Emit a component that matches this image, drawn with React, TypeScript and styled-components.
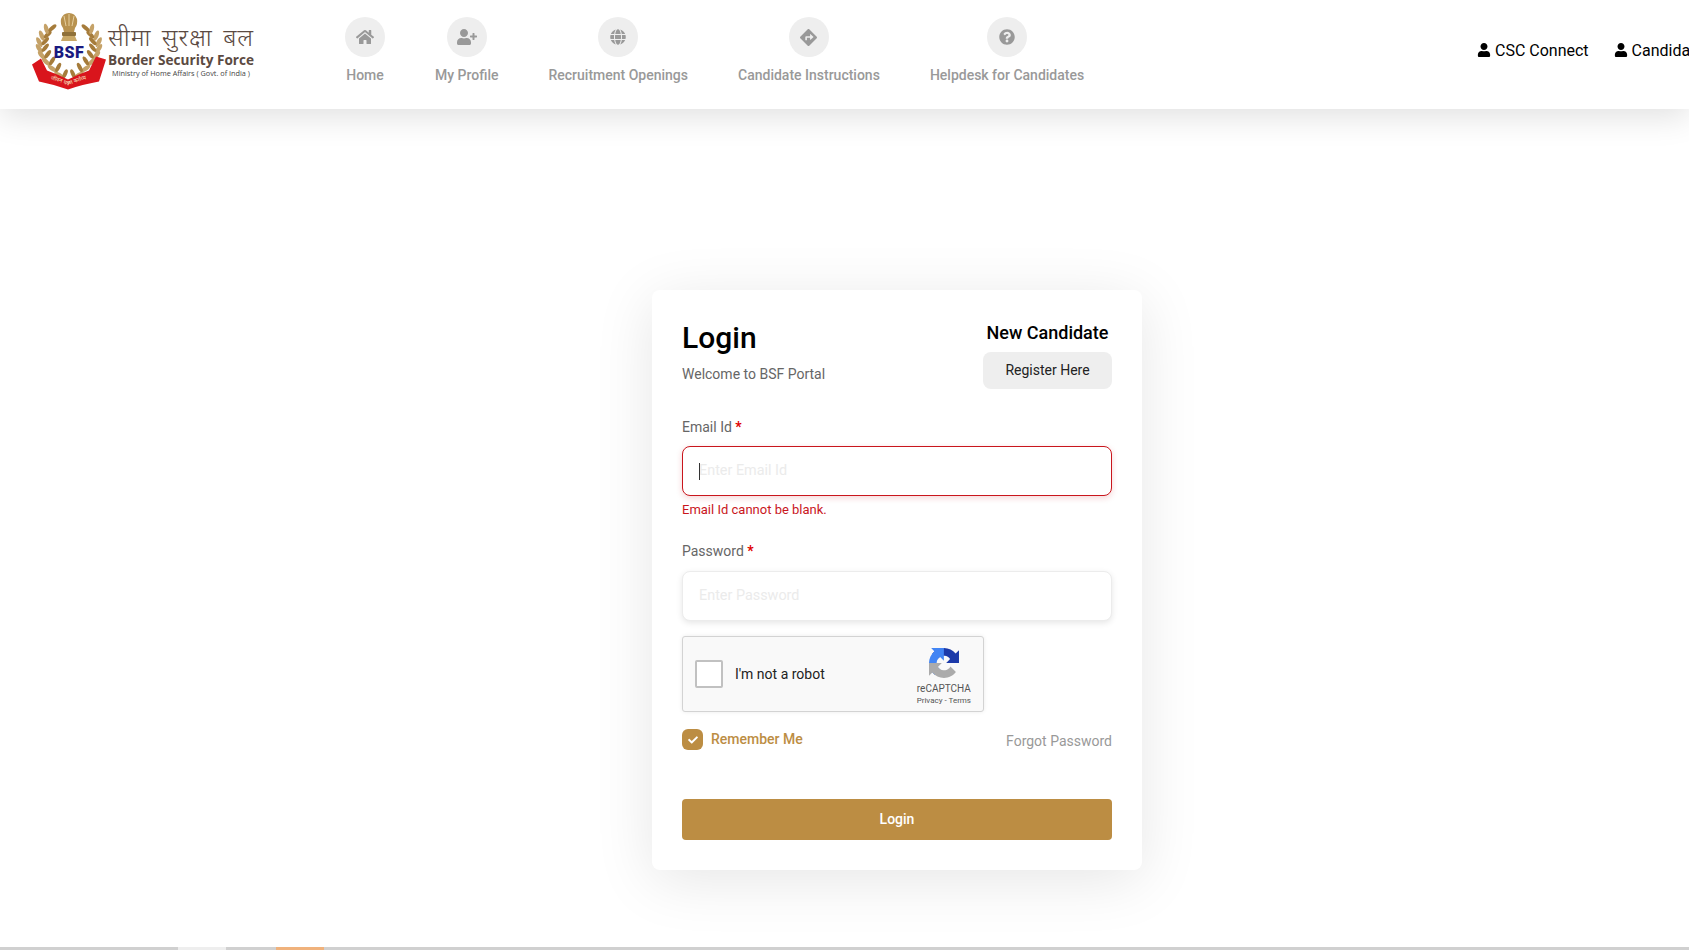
import React from 'react';
import styled, { createGlobalStyle } from 'styled-components';
import { FaCheck, FaDirections, FaGlobe, FaHome, FaQuestionCircle, FaUser, FaUserPlus } from 'react-icons/fa';

const gold = '#bc8d43';

const GlobalStyle = createGlobalStyle`
  html, body {
    margin: 0;
    padding: 0;
    background: #fff;
    overflow: hidden;
  }
  * {
    box-sizing: border-box;
  }
  body {
    font-family: Roboto, 'Liberation Sans', sans-serif;
  }
`;

const navItems = [
  { label: 'Home', icon: <FaHome size={18} /> },
  { label: 'My Profile', icon: <FaUserPlus size={20} /> },
  { label: 'Recruitment Openings', icon: <FaGlobe size={16} /> },
  { label: 'Candidate Instructions', icon: <FaDirections size={17} /> },
  { label: 'Helpdesk for Candidates', icon: <FaQuestionCircle size={16} /> },
];

const leafSteps = [0, 1, 2, 3, 4, 5, 6, 7];

const Emblem = () => (
  <svg width="80" height="84" viewBox="0 0 80 84">
    <defs>
      <path id="ribbon-line" d="M9 67.5 Q24 70.5 38 76.5 Q52 70.5 68 67.5" />
    </defs>
    {/* laurel wreath */}
    {[1, -1].map(side => (
      <g key={side} transform={side === 1 ? undefined : 'translate(78 0) scale(-1 1)'}>
        {leafSteps.map(i => {
          const t = i / 7;
          const x = 32 - 22 * Math.sin(t * 2.35) + t * 3;
          const y = 66 - t * 46;
          return (
            <g key={i}>
              <ellipse cx={x - 3} cy={y} rx="5.4" ry="2.2" fill="#c5a268" transform={`rotate(${30 + t * 45} ${x - 3} ${y})`} />
              <ellipse cx={x + 3} cy={y - 1} rx="5" ry="2" fill="#a67c3b" transform={`rotate(${-65 + t * 25} ${x + 3} ${y - 1})`} />
            </g>
          );
        })}
      </g>
    ))}
    {/* lion capital */}
    <path d="M31 10 Q33 4 39 4 Q45 4 47 10 Q48 15 45 19 L44 23 L34 23 L33 19 Q30 15 31 10Z" fill="#b8924f" />
    <path d="M34 7 L36 17 M39 5 L39 17 M44 7 L42 17" stroke="#e6cf9f" strokeWidth="1" />
    <rect x="32" y="23" width="14" height="4" rx="1" fill="#8f7038" />
    <path d="M33 27 L45 27 L47 32 L31 32Z" fill="#c9a866" />
    {/* ribbon */}
    <path transform="translate(0 1.5)" d="M2 54 L11 48 L17 60 Q28 64 38 69 Q48 64 59 60 L66 46 L76 49 L69 71 Q52 74 38 79 Q24 74 9 71Z" fill="#d9151c" />
    <text x="39" y="49" textAnchor="middle" fontFamily="Roboto, sans-serif" fontWeight="900" fontSize="16" letterSpacing="0.4" fill="#1a1a80">
      BSF
    </text>
    <text fontSize="5.5" fill="#f8e9c8" fontFamily="'Noto Sans', sans-serif">
      <textPath href="#ribbon-line" startOffset="50%" textAnchor="middle">
        जीवन पर्यन्त कर्तव्य
      </textPath>
    </text>
  </svg>
);

const RecaptchaLogo = () => (
  <svg width="30" height="30" viewBox="0 0 64 64">
    <path d="M64 31.955l-.033-1.37V4.687l-7.16 7.16C50.948 4.674 42.033.093 32.05.093c-10.4 0-19.622 4.96-25.458 12.64l11.736 11.86a15.55 15.55 0 0 1 4.754-5.334c2.05-1.6 4.952-2.906 8.968-2.906.485 0 .86.057 1.135.163 4.976.393 9.288 3.14 11.828 7.124l-8.307 8.307c10.522-.04 22.4-.066 27.295.005" fill="#1c3aa9" />
    <path d="M31.862.094l-1.37.033H4.594l7.16 7.16C4.58 13.147 0 22.06 0 32.046c0 10.4 4.96 19.622 12.64 25.458l11.86-11.736a15.55 15.55 0 0 1-5.334-4.754c-1.6-2.05-2.906-4.952-2.906-8.968 0-.485.057-.86.163-1.135.393-4.976 3.14-9.288 7.124-11.828l8.307 8.307c-.04-10.522-.066-22.4.005-27.295" fill="#4285f4" />
    <path d="M.001 32.045l.033 1.37v25.898l7.16-7.16c5.86 7.173 14.774 11.754 24.76 11.754 10.4 0 19.622-4.96 25.458-12.64l-11.736-11.86a15.55 15.55 0 0 1-4.754 5.334c-2.05 1.6-4.952 2.906-8.968 2.906-.485 0-.86-.057-1.135-.163-4.976-.393-9.288-3.14-11.828-7.124l8.307-8.307c-10.522.04-22.4.066-27.295-.005" fill="#ababab" />
  </svg>
);

export default function App() {
  return (
    <Page>
      <GlobalStyle />
      <Header>
        <Brand>
          <Emblem />
          <BrandText>
            <HindiName>सीमा सुरक्षा बल</HindiName>
            <EnglishName>Border Security Force</EnglishName>
            <Ministry>Ministry of Home Affairs ( Govt. of India )</Ministry>
          </BrandText>
        </Brand>
        <Nav>
          {navItems.map(item => (
            <NavItem key={item.label}>
              <NavCircle>{item.icon}</NavCircle>
              <NavLabel>{item.label}</NavLabel>
            </NavItem>
          ))}
        </Nav>
        <HeaderLinks>
          <HeaderLink>
            <FaUser />
            CSC Connect
          </HeaderLink>
          <HeaderLink>
            <FaUser />
            Candidate Login
          </HeaderLink>
        </HeaderLinks>
      </Header>

      <Main>
        <Card>
          <CardTop>
            <div>
              <Title>Login</Title>
              <Welcome>Welcome to BSF Portal</Welcome>
            </div>
            <NewCandidate>
              <NewCandidateTitle>New Candidate</NewCandidateTitle>
              <RegisterButton>Register Here</RegisterButton>
            </NewCandidate>
          </CardTop>

          <FieldLabel>
            Email Id <Required>*</Required>
          </FieldLabel>
          <InputWrap>
            <TextInput $error placeholder="Enter Email Id" />
            <Caret />
          </InputWrap>
          <ErrorText>Email Id cannot be blank.</ErrorText>

          <FieldLabel $second>
            Password <Required>*</Required>
          </FieldLabel>
          <InputWrap $gap={11}>
            <TextInput type="password" placeholder="Enter Password" />
          </InputWrap>

          <Captcha>
            <CaptchaBox />
            <CaptchaText>I'm not a robot</CaptchaText>
            <CaptchaBrand>
              <RecaptchaLogo />
              <CaptchaName>reCAPTCHA</CaptchaName>
              <CaptchaLinks>Privacy - Terms</CaptchaLinks>
            </CaptchaBrand>
          </Captcha>

          <OptionsRow>
            <Remember>
              <CheckBox>
                <FaCheck />
              </CheckBox>
              Remember Me
            </Remember>
            <Forgot>Forgot Password</Forgot>
          </OptionsRow>

          <LoginButton>Login</LoginButton>
        </Card>
      </Main>

      <FooterStrip>
        <FooterSegment $width="178px" $color="#d0d0d0" />
        <FooterSegment $width="48px" $color="#eeeeee" />
        <FooterSegment $width="50px" $color="#d0d0d0" />
        <FooterSegment $width="48px" $color="#f0b27c" />
        <FooterSegment $width="1365px" $color="#d0d0d0" />
      </FooterStrip>
    </Page>
  );
}

const Page = styled.div`
  height: 100vh;
  display: flex;
  flex-direction: column;
  overflow: hidden;
`;

const Header = styled.header`
  position: relative;
  z-index: 2;
  flex: 0 0 109px;
  display: flex;
  background: #fff;
  box-shadow: 0 8px 30px rgba(0, 0, 0, 0.12);
`;

const Brand = styled.div`
  flex: 0 0 320px;
  display: flex;
  align-items: flex-start;
  padding: 9px 0 0 30px;
`;

const BrandText = styled.div`
  display: flex;
  flex-direction: column;
  align-items: center;
  margin-left: -2px;
  padding-top: 14px;
  color: #5b4a42;
`;

const HindiName = styled.div`
  font-family: 'Noto Sans', 'Noto Sans CJK SC', sans-serif;
  font-size: 24.5px;
  font-weight: 300;
  line-height: 28px;
  letter-spacing: 1px;
  word-spacing: 3px;
  white-space: nowrap;
`;

const EnglishName = styled.div`
  font-family: 'Open Sans', sans-serif;
  font-size: 13.6px;
  font-weight: 700;
  line-height: 17px;
  white-space: nowrap;
`;

const Ministry = styled.div`
  font-family: 'Open Sans', sans-serif;
  font-size: 7.3px;
  line-height: 10px;
  color: #444;
  white-space: nowrap;
`;

const Nav = styled.nav`
  flex: 0 0 1157px;
  display: flex;
  align-items: flex-start;
  padding-top: 17px;
`;

const NavItem = styled.div`
  display: flex;
  flex-direction: column;
  align-items: center;
  padding: 0 25px;
`;

const NavCircle = styled.div`
  width: 40px;
  height: 40px;
  display: flex;
  align-items: center;
  justify-content: center;
  border-radius: 50%;
  background: #eeeeee;
  color: #999;
`;

const NavLabel = styled.div`
  margin-top: 9px;
  font-size: 14px;
  font-weight: 500;
  line-height: 18px;
  color: #999;
  white-space: nowrap;
`;

const HeaderLinks = styled.div`
  flex: 0 0 auto;
  display: flex;
  gap: 25px;
  padding-top: 40px;
`;

const HeaderLink = styled.div`
  display: flex;
  align-items: center;
  gap: 4px;
  height: 20px;
  font-size: 16px;
  color: #000;
  white-space: nowrap;

  svg {
    font-size: 14px;
  }
`;

const Main = styled.main`
  flex: 1;
  display: flex;
  justify-content: center;
  align-items: flex-start;
  padding: 181px 0 0 105px;
`;

const Card = styled.div`
  width: 490px;
  height: 580px;
  padding: 30px;
  background: #fff;
  border-radius: 8px;
  box-shadow: 0 10px 60px rgba(0, 0, 0, 0.1);
`;

const CardTop = styled.div`
  display: flex;
  justify-content: space-between;
  align-items: flex-start;
  height: 98px;
`;

const Title = styled.h1`
  margin: 0;
  font-size: 30px;
  font-weight: 500;
  line-height: 35px;
  color: #000;
`;

const Welcome = styled.p`
  margin: 10px 0 0;
  font-size: 14px;
  line-height: 18px;
  color: #666;
`;

const NewCandidate = styled.div`
  display: flex;
  flex-direction: column;
  align-items: center;
`;

const NewCandidateTitle = styled.div`
  font-size: 18px;
  font-weight: 500;
  line-height: 26px;
  color: #000;
`;

const RegisterButton = styled.button`
  width: 129px;
  height: 37px;
  margin-top: 6px;
  padding: 0 0 2px;
  border: 0;
  border-radius: 8px;
  background: #eeeeee;
  font-family: inherit;
  font-size: 14px;
  color: #222;
`;

const FieldLabel = styled.label<{ $second?: boolean }>`
  display: block;
  margin-top: ${props => (props.$second ? 24 : 0)}px;
  font-size: 14px;
  line-height: 18px;
  color: #666;
`;

const Required = styled.span`
  color: #e00000;
  font-weight: 700;
`;

const InputWrap = styled.div<{ $gap?: number }>`
  position: relative;
  margin-top: ${props => props.$gap ?? 10}px;
`;

const TextInput = styled.input<{ $error?: boolean }>`
  display: block;
  width: 100%;
  height: 50px;
  padding: 0 16px 1px;
  border: 1px solid ${props => (props.$error ? '#c9161d' : '#ececec')};
  border-radius: 8px;
  outline: 0;
  background: #fff;
  box-shadow: 0 2px 6px ${props => (props.$error ? 'rgba(201, 22, 29, 0.18)' : 'rgba(0, 0, 0, 0.1)')};
  font-family: inherit;
  font-size: 14.4px;

  &::placeholder {
    color: #ebebeb;
    opacity: 1;
  }
`;

const Caret = styled.span`
  position: absolute;
  left: 17px;
  top: 17px;
  width: 1px;
  height: 17px;
  background: #333;
`;

const ErrorText = styled.div`
  margin-top: 6px;
  font-size: 13px;
  line-height: 16px;
  color: #c9161d;
`;

const Captcha = styled.div`
  position: relative;
  display: flex;
  align-items: center;
  width: 302px;
  height: 76px;
  margin-top: 15px;
  padding-left: 12px;
  border: 1px solid #d3d3d3;
  border-radius: 3px;
  background: #f9f9f9;
  box-shadow: 0 0 4px rgba(0, 0, 0, 0.08);
`;

const CaptchaBox = styled.div`
  width: 28px;
  height: 28px;
  border: 2px solid #c1c1c1;
  border-radius: 2px;
  background: #fff;
`;

const CaptchaText = styled.div`
  margin-left: 12px;
  font-size: 14px;
  color: #222;
`;

const CaptchaBrand = styled.div`
  position: absolute;
  right: 12px;
  top: 11px;
  display: flex;
  flex-direction: column;
  align-items: center;
`;

const CaptchaName = styled.div`
  margin-top: 4px;
  font-size: 10px;
  line-height: 13px;
  color: #555;
`;

const CaptchaLinks = styled.div`
  font-size: 8px;
  line-height: 12px;
  color: #555;
`;

const OptionsRow = styled.div`
  display: flex;
  justify-content: space-between;
  align-items: flex-start;
  margin-top: 17px;
`;

const Remember = styled.div`
  display: flex;
  align-items: center;
  gap: 8px;
  font-size: 14px;
  font-weight: 500;
  line-height: 21px;
  color: ${gold};
`;

const CheckBox = styled.span`
  width: 21px;
  height: 21px;
  display: flex;
  align-items: center;
  justify-content: center;
  border-radius: 6px;
  background: ${gold};
  color: #fff;
  font-size: 10px;
`;

const Forgot = styled.div`
  margin-top: 3px;
  font-size: 14px;
  line-height: 18px;
  color: #999;
`;

const LoginButton = styled.button`
  display: block;
  width: 100%;
  height: 41px;
  margin-top: 49px;
  padding: 0 0 2px;
  border: 0;
  border-radius: 4px;
  background: ${gold};
  font-family: inherit;
  font-size: 14px;
  font-weight: 500;
  color: #fff;
`;

const FooterStrip = styled.footer`
  flex: 0 0 3px;
  display: flex;
`;

const FooterSegment = styled.div<{ $width: string; $color: string }>`
  flex: 0 0 ${props => props.$width};
  background: ${props => props.$color};
`;
